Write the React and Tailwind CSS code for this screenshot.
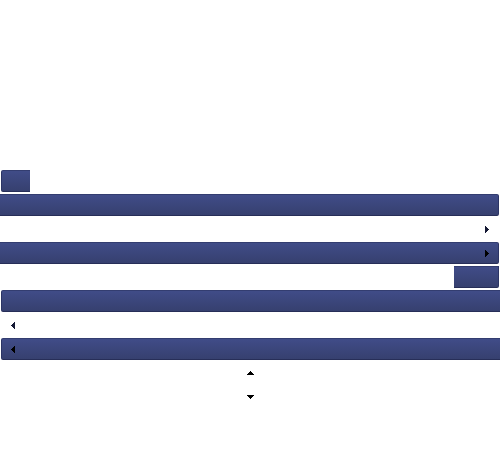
const surface =
  "border-y border-t-[#333d70] border-b-[#272e58] bg-linear-to-b from-[#404c88] to-[#36406f]";
const leftCap = "ml-px rounded-l-xs border-l border-l-[#2c3565]";
const rightCap = "mr-px rounded-r-xs border-r border-r-[#2c3565]";

function Arrow({ direction, className = "text-[#141833]" }) {
  const sideways = direction === "left" || direction === "right";
  const points = {
    right: "M0 0h1v1h1v1h1v1h1v1h-1v1h-1v1h-1v1h-1z",
    left: "M4 0h-1v1h-1v1h-1v1h-1v1h1v1h1v1h1v1h1z",
    up: "M3 0h1v1h1v1h1v1h1v1h-7v-1h1v-1h1v-1h1z",
    down: "M0 0h7v1h-1v1h-1v1h-1v1h-1v-1h-1v-1h-1v-1h-1z",
  };
  return (
    <svg
      width={sideways ? 4 : 7}
      height={sideways ? 7 : 4}
      fill="currentColor"
      shapeRendering="crispEdges"
      className={className}
      aria-hidden="true"
    >
      <path d={points[direction]} />
    </svg>
  );
}

function Button({ label, className = "", children }) {
  return (
    <button
      type="button"
      aria-label={label}
      className={`flex h-[22px] items-center ${className}`}
    >
      {children}
    </button>
  );
}

export default function App() {
  return (
    <main className="flex min-h-screen flex-col gap-0.5 bg-white pt-[170px] font-['Liberation_Sans',sans-serif]">
      <Button label="Start" className={`w-[29px] self-start ${surface} ${leftCap}`} />
      <Button label="Item" className={`${surface} ${rightCap}`} />
      <Button label="Next" className="justify-end pr-[11px]">
        <Arrow direction="right" />
      </Button>
      <Button label="Next item" className={`justify-end pr-[9px] ${surface} ${rightCap}`}>
        <Arrow direction="right" className="text-black" />
      </Button>
      <Button label="End" className={`w-[45px] self-end ${surface} ${rightCap} rounded-tr-none`} />
      <Button label="Item" className={`${surface} ${leftCap}`} />
      <Button label="Previous" className="pl-[11px]">
        <Arrow direction="left" />
      </Button>
      <Button label="Previous item" className={`pl-[9px] ${surface} ${leftCap}`}>
        <Arrow direction="left" className="text-black" />
      </Button>
      <Button label="Scroll up" className="justify-center">
        <Arrow direction="up" className="text-black" />
      </Button>
      <Button label="Scroll down" className="justify-center">
        <Arrow direction="down" className="text-black" />
      </Button>
    </main>
  );
}
